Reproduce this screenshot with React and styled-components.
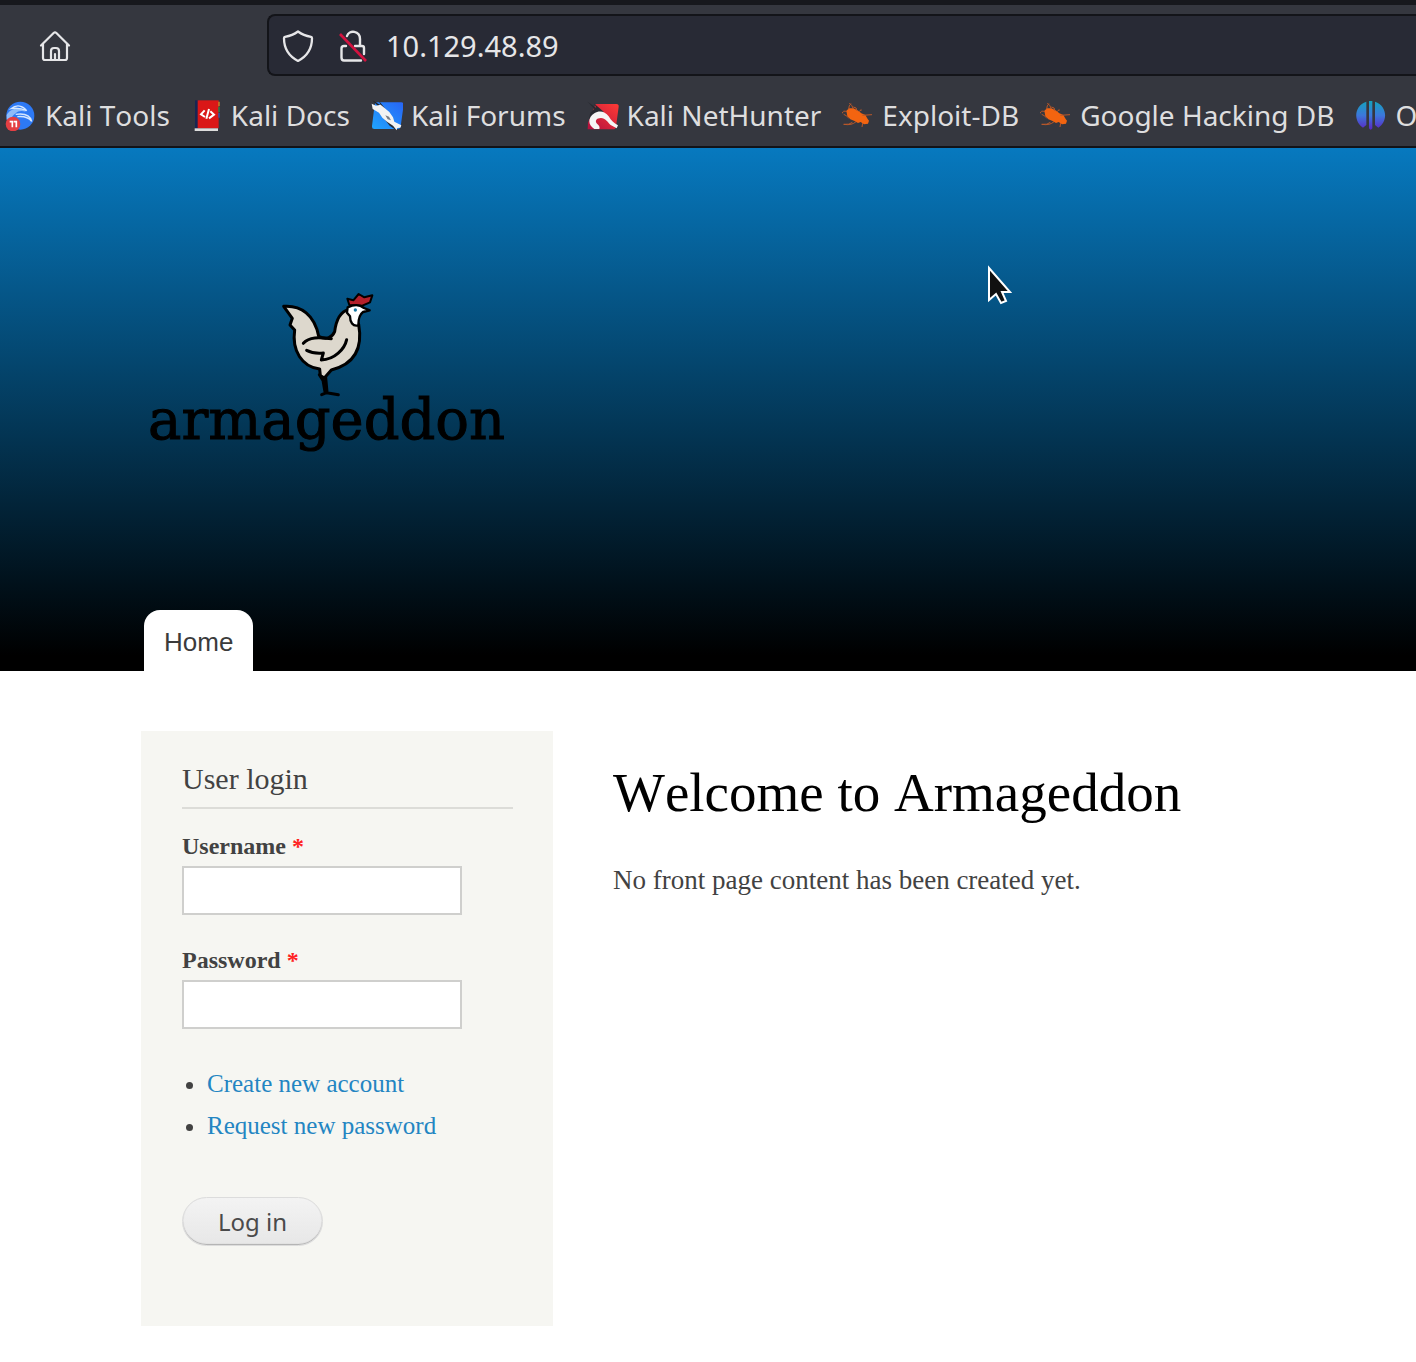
import React from "react";
import styled, { createGlobalStyle } from "styled-components";

const serif = `"Liberation Serif", "Times New Roman", serif`;
const sans = `"Liberation Sans", Arial, sans-serif`;
const ui = `"Noto Sans", "Open Sans", sans-serif`;

const GlobalStyle = createGlobalStyle`
  *, *::before, *::after { box-sizing: border-box; }
  body {
    margin: 0;
    background: #fff;
    color: #424242;
    font-family: ${serif};
    font-kerning: none;
  }
  button, input { font: inherit; color: inherit; }
`;

const Chrome = styled.header`
  background: #35373f;
  border-top: 5px solid #17181d;
  border-bottom: 2px solid #121318;
  color: #dededf;
  font-family: ${ui};
  overflow: hidden;
`;

const NavBar = styled.div`
  display: flex;
  align-items: center;
  padding: 9px 0 8px 39px;
`;

const IconButton = styled.button`
  display: flex;
  flex: none;
  padding: 1px 0 0;
  border: 0;
  background: none;
  color: #e6e6e8;
`;

const AddressBar = styled.div`
  display: flex;
  align-items: center;
  flex: 1;
  gap: 24px;
  height: 62px;
  margin-left: 196px;
  padding-left: 13px;
  background: #282a35;
  border: 2px solid #131419;
  border-right: 0;
  border-radius: 8px 0 0 8px;
`;

const AddressInput = styled.input`
  flex: 1;
  min-width: 0;
  margin-left: -8px;
  padding: 2px 0 0;
  border: 0;
  outline: 0;
  background: none;
  color: #e6e6e8;
  font-size: 29px;
  line-height: 40px;
`;

const Bookmarks = styled.nav`
  display: flex;
  gap: 21px;
  height: 62px;
  padding-left: 5px;
`;

const Bookmark = styled.a`
  display: flex;
  flex: none;
  align-items: center;
  gap: 8px;
  color: inherit;
  font-size: 28px;
  line-height: 40px;
  text-decoration: none;
  white-space: nowrap;
`;

const Hero = styled.div`
  position: relative;
  padding: 142px 144px 0;
  background: linear-gradient(#0779bf, #000 97%);
`;

const LogoLink = styled.a`
  display: block;
  width: 360px;
  margin: 0 0 150px 4px;
  svg { display: block; }
`;

const Pointer = styled.svg`
  position: absolute;
  left: 987px;
  top: 117px;
`;

const Tabs = styled.nav`
  display: flex;
`;

const Tab = styled.a`
  padding: 14px 20px 11px;
  background: #fff;
  border-radius: 16px 16px 0 0;
  color: #3b3b3b;
  font: 26px/36px ${sans};
  text-decoration: none;
`;

const Page = styled.div`
  display: flex;
  align-items: flex-start;
  gap: 60px;
  padding: 60px 60px 36px 141px;
`;

const Sidebar = styled.aside`
  flex: none;
  width: 412px;
  padding: 28px 40px 80px 41px;
  background: #f6f6f2;
`;

const BlockTitle = styled.h2`
  margin: 0 0 19px;
  padding-bottom: 8px;
  border-bottom: 2px solid #dcdcd8;
  font-size: 30px;
  font-weight: 400;
  line-height: 40px;
`;

const Field = styled.div`
  margin-bottom: 27px;
`;

const Label = styled.label`
  display: block;
  margin-bottom: 2px;
  font-size: 24px;
  font-weight: 700;
  line-height: 36px;
`;

const Required = styled.span`
  color: #f22;
`;

const TextInput = styled.input`
  display: block;
  width: 280px;
  height: 49px;
  padding: 4px 8px;
  background: #fff;
  border: 2px solid #cfcfcd;
  font-size: 24px;
`;

const Links = styled.ul`
  margin: 0 0 50px;
  padding: 7px 0 0 25px;
  font-size: 25px;
  line-height: 42px;
`;

const TextLink = styled.a`
  color: #2385c2;
  text-decoration: none;
`;

const Submit = styled.button`
  display: block;
  height: 49px;
  padding: 0 35px;
  background: linear-gradient(#f3f3f3, #e7e7e7);
  border: 1px solid #dcdcdc;
  border-radius: 25px;
  box-shadow: inset 0 -1px 1px #b0b0b0;
  color: #4a4a4a;
  font: 24px/40px ${ui};
`;

const Main = styled.main`
  flex: 1;
  min-width: 0;
  padding-top: 30px;
`;

const Heading = styled.h1`
  margin: 0 0 35px;
  color: #000;
  font-size: 55px;
  font-weight: 400;
  line-height: 64px;
`;

const Message = styled.p`
  margin: 0;
  font-size: 27px;
  line-height: 40px;
`;

const HomeIcon = () => (
  <svg width="32" height="32" viewBox="0 0 32 32" fill="none" stroke="currentColor" strokeWidth="2.2" strokeLinejoin="round" strokeLinecap="round">
    <path d="M2 15.5 14.6 3q1.4-1.2 2.8 0L30 15.5M4 14v14q0 2 2 2h20q2 0 2-2V14M12 30v-9q0-3 3-3h2q3 0 3 3v9M16 30v-6" />
  </svg>
);

const ShieldIcon = () => (
  <svg width="32" height="32" viewBox="0 0 32 32" fill="none" stroke="currentColor" strokeWidth="2.3" strokeLinejoin="round">
    <path d="M16 1.500c4 3 8 4.500 13 5.300q1 .2 1 1.500C30 19 25.500 26 16 31 6.500 26 2 19 2 8.300q0-1.300 1-1.500C8 6 12 4.500 16 1.500Z" />
  </svg>
);

const InsecureIcon = () => (
  <svg width="32" height="32" viewBox="0 0 32 32" fill="none">
    <g stroke="currentColor" strokeWidth="2.400" strokeLinejoin="round" strokeLinecap="round">
      <path d="M9 6c2-6.500 13-5.500 13 3v7h2q2 0 2 2v6M8 16H6q-2.500 0-2.500 2.500v9q0 3 2.500 3h17M17 16h5" />
    </g>
    <path d="M2 4 28 31" stroke="#d3123f" strokeWidth="2.600" />
  </svg>
);

const Favicon = ({ children }) => (
  <svg width="32" height="32" viewBox="0 0 96 96" aria-hidden="true">{children}</svg>
);

const ToolsIcon = () => (
  <Favicon>
    <circle cx="46" cy="50" r="42" fill="#2d79f5" />
    <path d="M5 48C17 28 42 22 63 38c-16-4-24-1-31 5-8 6-12 10-12 18L5 62Z" fill="#8dbcfb" />
    <path d="M18 29c17-14 36-9 47 6-17-8-30-9-47-6Zm14 17c22-3 43 0 48 21-11-14-24-16-43-14" stroke="#d5e7ff" strokeWidth="4" fill="none" />
    <circle cx="24" cy="75" r="22" fill="#e43f43" />
    <path d="M14 68h8v17m4-17h8v17" stroke="#fff" strokeWidth="5" fill="none" />
  </Favicon>
);

const DocsIcon = () => (
  <Favicon>
    <path d="M12 4h10v84H12z" fill="#172653" />
    <path d="M20 4h63v84H20z" fill="#da1717" />
    <path d="M82 8h4v14h-4z" fill="#d98b22" />
    <path d="M82 24h4v16h-4z" fill="#288a4b" />
    <path d="M82 42h4v14h-4z" fill="#315bb5" />
    <path d="M11 88h70v8H11z" fill="#ddd" />
    <path d="m41 34-11 12 12 8m12 4 15-11-11-10M54 30l-8 29" stroke="#fff" strokeWidth="6" fill="none" />
  </Favicon>
);

const ForumsIcon = () => (
  <Favicon>
    <defs>
      <linearGradient id="forum" x1="0" y1="1" x2="1" y2="0">
        <stop offset="0" stopColor="#20a5ff" />
        <stop offset="1" stopColor="#2864f5" />
      </linearGradient>
    </defs>
    <path d="M20 10h71q8 0 7 8l-9 64q-1 8-9 8H10q-8 0-7-9l8-64q1-7 9-7Z" fill="url(#forum)" />
    <path d="m4 4 25 15-5-13 17 21-9 5Z" fill="#222" />
    <path d="m26 42 30 38 20 14 3-7-29-22Z" fill="#252a34" />
    <path d="M2 14 15 20 29 17 55 39 66 55 70 68 91 79 88 86 79 87 77 94 66 80 48 68 34 56 24 41 5 30Z" fill="#f2f2f2" />
    <path d="m43 49 11 4 6 11-10-3-7-12Z" fill="#767b83" />
  </Favicon>
);

const NetHunterIcon = () => (
  <Favicon>
    <defs>
      <linearGradient id="nethunter" x1="0" y1="1" x2="1" y2="0">
        <stop offset="0" stopColor="#b2103f" />
        <stop offset="1" stopColor="#ff3b35" />
      </linearGradient>
    </defs>
    <path d="M26 15h62q8 0 7 8l-8 60q-1 8-9 8H2l1-20Z" fill="url(#nethunter)" />
    <path d="M2 8 28 27 22 14l28 24-44 23 4-19 12-12Z" fill="#282a31" />
    <path d="M22 90C3 79 1 56 22 43c15-10 32-6 43 9 8 13 15 20 28 27l-4 9-18-10C62 70 55 57 42 57c-14 0-20 9-11 18 6 5 8 10 6 15Z" fill="#f5f5f5" />
  </Favicon>
);

const BugIcon = () => (
  <Favicon>
    <path d="M13 35 21 28 34 28 49 35 58 43 70 48 77 60 81 65 78 74 66 76 56 69 48 72 36 65 25 61 16 52Z" fill="#f36410" />
    <path d="M15 38Q2 33 1 43M20 31q0-12 7-17M34 30Q31 19 22 12M45 36q0-12-11-12M50 39q12-13 6-3M61 49l29-2M20 57Q12 48 5 46M42 68Q30 80 5 76q18 2 26-6M62 72l-2 12" stroke="#b9582a" strokeWidth="3" fill="none" />
  </Favicon>
);

const OffSecIcon = () => (
  <Favicon>
    <defs>
      <linearGradient id="offsec" x1="0" y1="0" x2="0" y2="1">
        <stop offset="0" stopColor="#14a2bd" />
        <stop offset=".5" stopColor="#3c78db" />
        <stop offset="1" stopColor="#5b26c6" />
      </linearGradient>
    </defs>
    <path d="M34 8v70l-10 8C-5 68-4 21 34 8ZM60 8c38 13 39 60 10 78l-10-8ZM42 6h10v82q-5 8-10 0Z" fill="url(#offsec)" />
  </Favicon>
);

const bookmarks = [
  ["Kali Tools", ToolsIcon],
  ["Kali Docs", DocsIcon],
  ["Kali Forums", ForumsIcon],
  ["Kali NetHunter", NetHunterIcon],
  ["Exploit-DB", BugIcon],
  ["Google Hacking DB", BugIcon],
  ["O", OffSecIcon],
];

const Logo = () => (
  <svg width="360" height="170" viewBox="0 0 360 170" role="img" aria-label="armageddon">
    <g transform="translate(122 -10) scale(.33333)" stroke="#000" strokeLinejoin="round" strokeLinecap="round">
      <path d="M238 75 232 56 250 61 266 42 283 52 307 46 300 67 277 77Z" fill="#b4202b" strokeWidth="6" />
      <path d="M41 79C93 75 134 105 146 169 170 182 187 171 194 155 198 122 208 96 236 88L266 133C278 200 260 251 184 270L163 294 151 287 149 267C96 261 65 212 74 150L60 135 67 115Z" fill="#ddd8cd" strokeWidth="9" />
      <path d="M233 82Q263 68 282 84L299 91 279 96Q265 106 265 136C248 141 240 125 240 109L231 98Z" fill="#fff" strokeWidth="7" />
      <circle cx="256" cy="90" r="5" fill="#1678a3" stroke="none" />
      <path d="M100 190C118 170 146 172 184 176M110 211Q130 222 160 219L154 240C194 239 224 207 230 179" fill="none" strokeWidth="9" />
      <path d="M148 284 159 301 165 336M167 292 171 336M155 344 170 338 205 344" fill="none" strokeWidth="9" />
    </g>
    <text x="0" y="149" fill="#000" stroke="#000" fontFamily="DejaVu Serif, serif" fontSize="56">armageddon</text>
  </svg>
);

export default function App() {
  return (
    <>
      <GlobalStyle />
      <Chrome>
        <NavBar>
          <IconButton aria-label="Home page"><HomeIcon /></IconButton>
          <AddressBar>
            <IconButton aria-label="Tracking protection"><ShieldIcon /></IconButton>
            <IconButton aria-label="Connection not secure"><InsecureIcon /></IconButton>
            <AddressInput aria-label="Address" defaultValue="10.129.48.89" />
          </AddressBar>
        </NavBar>
        <Bookmarks>
          {bookmarks.map(([name, Icon]) => (
            <Bookmark href="#" key={name}><Icon />{name}</Bookmark>
          ))}
        </Bookmarks>
      </Chrome>
      <Hero>
        <LogoLink href="#"><Logo /></LogoLink>
        <Tabs><Tab href="#">Home</Tab></Tabs>
        <Pointer width="28" height="42" viewBox="0 0 28 42" aria-hidden="true">
          <path d="M2 3v32l7-6 5 9 5-2-4-9h8Z" fill="#111" stroke="#fff" strokeWidth="2" />
        </Pointer>
      </Hero>
      <Page>
        <Sidebar>
          <BlockTitle>User login</BlockTitle>
          <form onSubmit={(event) => event.preventDefault()}>
            <Field>
              <Label htmlFor="username">Username <Required>*</Required></Label>
              <TextInput id="username" type="text" />
            </Field>
            <Field>
              <Label htmlFor="password">Password <Required>*</Required></Label>
              <TextInput id="password" type="password" />
            </Field>
            <Links>
              <li><TextLink href="#">Create new account</TextLink></li>
              <li><TextLink href="#">Request new password</TextLink></li>
            </Links>
            <Submit type="submit">Log in</Submit>
          </form>
        </Sidebar>
        <Main>
          <Heading>Welcome to Armageddon</Heading>
          <Message>No front page content has been created yet.</Message>
        </Main>
      </Page>
    </>
  );
}
